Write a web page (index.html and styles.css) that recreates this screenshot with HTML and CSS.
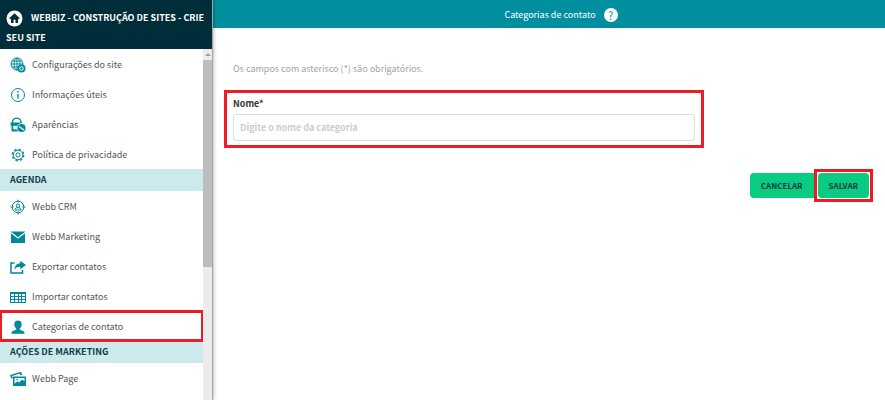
FILE: index.html
```html
<!DOCTYPE html>
<html lang="pt-BR">
<head>
<meta charset="utf-8">
<meta name="viewport" content="width=device-width, initial-scale=1">
<title>Categorias de contato</title>
<link rel="stylesheet" href="styles.css">
</head>
<body>
<div class="app">
  <aside class="sidebar">
    <header class="site-name">
      <svg class="home" viewBox="0 0 17 17" aria-hidden="true"><circle cx="8.500" cy="8.500" r="8" fill="#fff"/><path d="M8.500 3.300 3.200 8.200l1 1L5 8.500V13h2.500V9.800h2V13H12V8.500l.8.700 1-1z" fill="#002d3a"/></svg>WEBBIZ - CONSTRUÇÃO DE SITES - CRIE SEU SITE
    </header>
    <div class="scroll-area">
      <nav class="menu">
        <a class="item" href="#"><svg class="icon" viewBox="0 0 16 16" aria-hidden="true"><g class="line"><circle cx="7" cy="7" r="6"/><ellipse cx="7" cy="7" rx="3" ry="6"/><path d="M7 1v12M1 7h12M2 4h10M2 10h10"/></g><circle cx="11.500" cy="11.500" r="4" class="solid"/><circle cx="11.500" cy="11.500" r="1.800" fill="none" stroke="#fff"/></svg>Configurações do site</a>
        <a class="item" href="#"><svg class="icon" viewBox="0 0 16 16" aria-hidden="true"><g class="line"><circle cx="8" cy="8" r="6.500"/><path d="M8 7v4.500" stroke-width="1.400"/></g><circle cx="8" cy="4.800" r=".9" class="solid"/></svg>Informações úteis</a>
        <a class="item" href="#"><svg class="icon" viewBox="0 0 16 16" aria-hidden="true"><path d="M2.500 6V5.300a4.200 4.200 0 0 1 8.400 0V7" fill="none" stroke="#00889b" stroke-width="1.400"/><path class="solid" d="M.5 5.500H12v3H.5zM1.500 8h10v6.500h-10z"/><path d="M3.300 8.800h3.500v3.500H3.300z" fill="#fff"/><circle cx="11.500" cy="11" r="4.800" fill="#fff"/><circle cx="11.500" cy="11" r="4.100" class="solid"/><path d="m9 9.500 5 3.500" stroke="#fff" stroke-width="1.200"/></svg>Aparências</a>
        <a class="item" href="#"><svg class="icon" viewBox="0 0 16 16" aria-hidden="true"><g class="line"><circle cx="8" cy="8" r="5.700" stroke-width="1.400" stroke-dasharray="2.300 2.177"/><circle cx="8" cy="8" r="4.800"/><circle cx="8" cy="8" r="2.100"/></g></svg>Política de privacidade</a>
        <h2 class="section">AGENDA</h2>
        <a class="item" href="#"><svg class="icon" viewBox="0 0 16 16" aria-hidden="true"><g class="line"><circle cx="8" cy="8" r="5.800"/><path d="M8 .5v3M8 12.500v3M.5 8h3M12.500 8h3"/><circle cx="8" cy="6.700" r="1.700"/><path d="M5 11c0-2 1.500-2.300 3-2.300s3 .3 3 2.300z"/></g></svg>Webb CRM</a>
        <a class="item" href="#"><svg class="icon" viewBox="0 0 16 16" aria-hidden="true"><path class="solid" d="M1 2.500h14v11.500H1z"/><path d="m1 3.500 7 5.500 7-5.500" fill="none" stroke="#fff" stroke-width="1.200"/></svg>Webb Marketing</a>
        <a class="item" href="#"><svg class="icon" viewBox="0 0 16 16" aria-hidden="true"><path d="M4.500 4H1v10h11.500V11" fill="none" stroke="#00889b" stroke-width="1.500"/><path class="solid" d="M10.300 1.800 16 6l-5.700 4.200V7.700C7.500 7.400 5.500 8.500 4.500 11c0-4 2-6.500 5.800-6.700z"/></svg>Exportar contatos</a>
        <a class="item" href="#"><svg class="icon" viewBox="0 0 16 16" aria-hidden="true"><path class="solid" d="M0 3h16v11H0z"/><path d="M1 5h3v2H1zm4 0h3v2H5zm4 0h2v2H9zm3 0h3v2h-3zM1 8h3v2H1zm4 0h3v2H5zm4 0h2v2H9zm3 0h3v2h-3zM1 11h3v2H1zm4 0h3v2H5zm4 0h2v2H9zm3 0h3v2h-3z" fill="#fff"/></svg>Importar contatos</a>
        <a class="item marked" href="#" aria-current="page"><svg class="icon" viewBox="0 0 16 16" aria-hidden="true"><path class="solid" d="M8 1.500c2.400 0 3.700 1.400 3.700 3.700 0 2-.8 3.400-2 4.300v1c.6 1 4.800 1 4.800 3.500v.7h-13V14c0-2.500 4.200-2.500 4.800-3.500v-1c-1.200-.9-2-2.300-2-4.300 0-2.300 1.300-3.700 3.700-3.700z"/></svg>Categorias de contato</a>
        <h2 class="section">AÇÕES DE MARKETING</h2>
        <a class="item" href="#"><svg class="icon" viewBox="0 0 16 16" aria-hidden="true"><path class="solid" d="M0 4 11 .8l1.300 3.200-2 .2-.6-1.600L2 5l.8 2-1.300 1zM3 5.500h13V15H3z"/><path d="M4.500 7h10v3.300L12 8.500l-3 3-1.700-1.300-2.800 2.500z" fill="#fff"/><circle cx="7" cy="8.500" r=".8" class="solid"/></svg>Webb Page</a>
      </nav>
      <div class="scrollbar" aria-hidden="true"><span class="arrow"></span><span class="thumb"></span></div>
    </div>
  </aside>
  <main class="content">
    <header class="topbar">
      <h1>Categorias de contato</h1>
      <a class="help" href="#" aria-label="Ajuda">?</a>
    </header>
    <form class="form">
      <p class="hint">Os campos com asterisco (*) são obrigatórios.</p>
      <div class="field">
        <label for="nome">Nome*</label>
        <input id="nome" type="text" placeholder="Digite o nome da categoria">
      </div>
      <div class="actions">
        <button class="btn cancel" type="button">CANCELAR</button>
        <div class="save-mark"><button class="btn" type="submit">SALVAR</button></div>
      </div>
    </form>
  </main>
</div>
</body>
</html>
```
FILE: styles.css
```css
* { box-sizing: border-box; }

body {
  margin: 0;
  background: #fff;
  color: #555;
  font: 9px/20px "Noto Sans CJK JP", "Open Sans", sans-serif;
}

a { color: inherit; text-decoration: none; }
h1, h2, p { margin: 0; font-size: inherit; }

.app {
  display: flex;
  height: 100vh;
  overflow: hidden;
}

.sidebar {
  display: flex;
  flex: 0 0 213px;
  flex-direction: column;
  border-right: 1px solid #a5a5a5;
  box-shadow: 0 0 4px rgba(0, 0, 0, .4);
  z-index: 1;
}

.site-name {
  padding: 8px 4px 1px 6px;
  background: #002d3a;
  color: #fff;
  font-weight: 700;
}

.home {
  width: 17px;
  height: 17px;
  margin-right: 8px;
  vertical-align: middle;
}

.scroll-area {
  display: flex;
  flex: 1;
  min-height: 0;
}

.menu {
  flex: 1;
  overflow: hidden;
}

.item {
  display: flex;
  align-items: center;
  gap: 6px;
  height: 30px;
  padding: 2px 0 0 10px;
}

.icon { width: 16px; height: 16px; }
.line { fill: none; stroke: #00889b; }
.solid { fill: #00889b; }

.marked {
  outline: 3px solid #ed1c24;
  outline-offset: -2px;
}

.section {
  padding: 1px 10px;
  background: #cce9ec;
  color: #123f4b;
  font-weight: 700;
}

.scrollbar {
  display: flex;
  flex: 0 0 9px;
  flex-direction: column;
  align-items: center;
  background: #ececec;
}

.arrow {
  margin: 4px 0;
  border: 3px solid transparent;
  border-top: 0;
  border-bottom-color: #a0a0a0;
}

.thumb {
  width: 100%;
  height: 59%;
  background: #bdbdbd;
}

.content { flex: 1; min-width: 0; }

.topbar {
  display: flex;
  align-items: center;
  justify-content: center;
  gap: 8px;
  height: 28px;
  padding: 1px 0 0 24px;
  background: #008f9f;
  color: #fff;
}

.topbar h1 { font-weight: 400; }

.help {
  width: 14px;
  height: 14px;
  border-radius: 50%;
  background: #fff;
  color: #008f9f;
  font-size: 11px;
  line-height: 14px;
  text-align: center;
}

.form { padding: 31px 12px 0 11px; }

.hint {
  padding-left: 9px;
  color: #a3a3a3;
}

.field {
  width: 74%;
  margin-top: 11px;
  padding: 1px 6px 4px;
  border: 3px solid #ed1c24;
}

.field label {
  display: block;
  color: #333;
  font-weight: 700;
}

.field input {
  display: block;
  width: 100%;
  height: 27px;
  padding: 0 6px;
  border: 1px solid #ddd;
  border-radius: 3px;
  font: inherit;
  font-weight: 700;
}

.field input::placeholder { color: #ccc; opacity: 1; }

.actions {
  display: flex;
  align-items: center;
  justify-content: flex-end;
  margin-top: 21px;
}

.btn {
  height: 25px;
  padding: 0 11px;
  border: 0;
  border-radius: 4px;
  background: #0acc80;
  color: #063e46;
  font: inherit;
  font-size: 8px;
  font-weight: 700;
}

.cancel { border-radius: 4px 0 0 4px; }

.save-mark {
  display: flex;
  padding: 1px;
  border: 3px solid #ed1c24;
}
```
